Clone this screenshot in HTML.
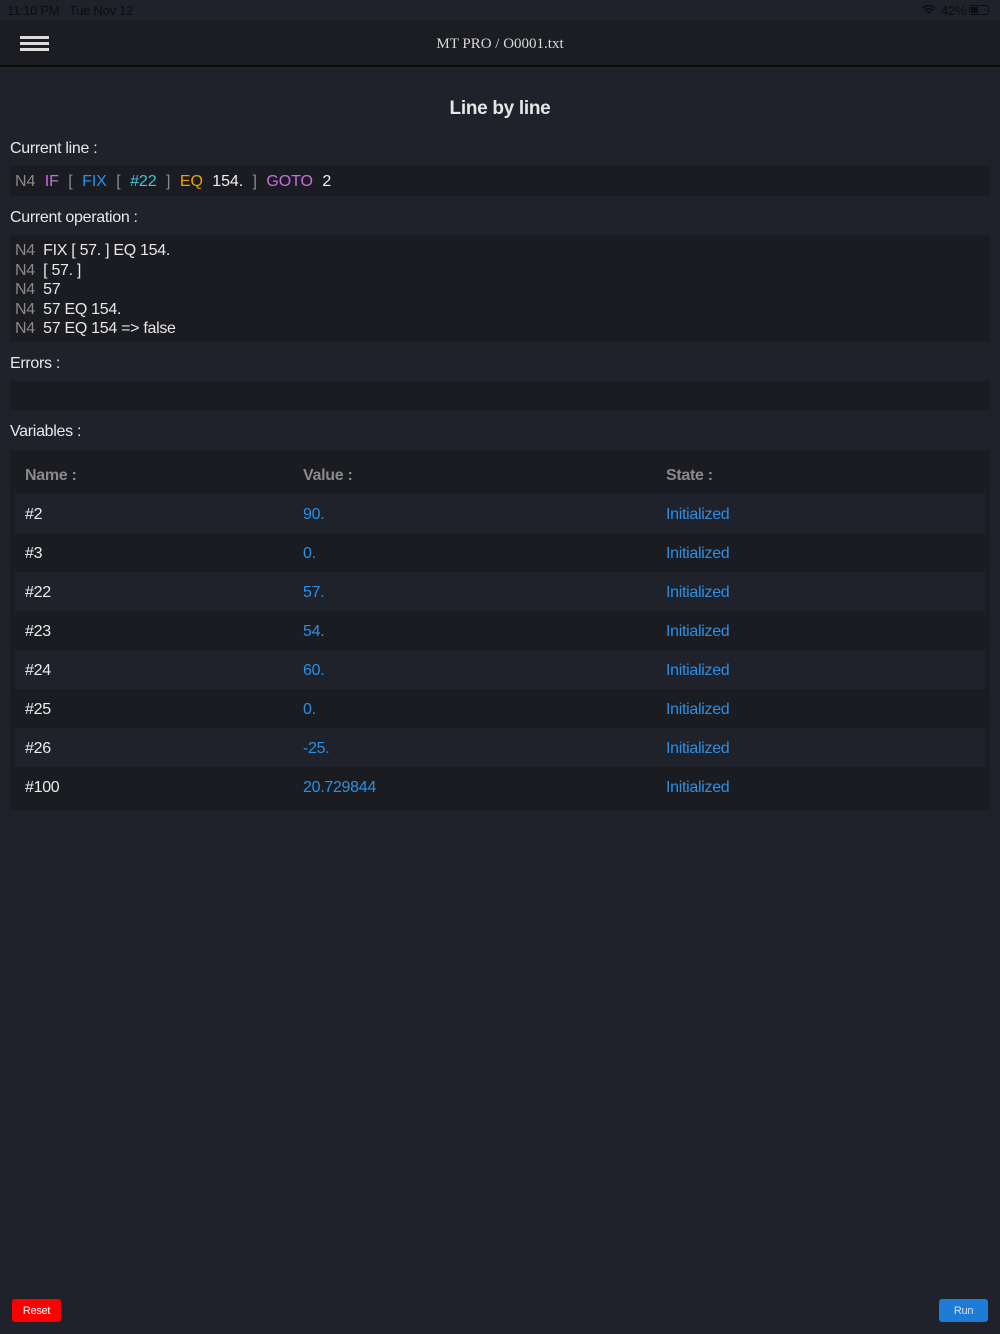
<!DOCTYPE html>
<html><head><meta charset="utf-8"><style>
*{margin:0;padding:0;box-sizing:border-box}
body{width:1000px;height:1334px;background:#1f222a;font-family:"Liberation Sans",sans-serif;position:relative;overflow:hidden;color:#e6e6e6;letter-spacing:-0.3px}
.a{position:absolute}
.sb{top:0;left:0;width:1000px;height:20px;font-size:13px;color:#0c0d10}
.hd{top:20px;left:0;width:1000px;height:47px;background:#1b1d22;border-bottom:2px solid #0a0a0c}
.box{background:#1a1c21;left:10px;width:980px}
.lbl{left:10px;font-size:16px;color:#e8e8e8}
.g{color:#8a8a8a}
.row{left:15px;width:970px;height:39px;font-size:16px;line-height:41px}
.row span{position:absolute}
.l{background:#1f222a}
.n{left:10px;color:#ececec}.v{left:288px;color:#2b8fe6}.s{left:651px;color:#2b8fe6}
</style></head><body>
<div class="a sb"><span class="a" style="left:7px;top:3px">11:10 PM&nbsp;&nbsp;&nbsp;Tue Nov 12</span>
<svg class="a" style="left:922px;top:4px" width="14" height="11" viewBox="0 0 14 11"><path d="M1 4a9 9 0 0 1 12 0M3 6.5a6 6 0 0 1 8 0M5 9a3 3 0 0 1 4 0" stroke="#0c0d10" stroke-width="1.6" fill="none"/></svg>
<span class="a" style="left:941px;top:3px">42%</span>
<div class="a" style="left:969px;top:5px;width:20px;height:10px;border:1px solid #0c0d10;border-radius:3px"><div style="width:7px;height:6px;margin:1px;background:#0c0d10"></div></div></div>
<div class="a hd">
<div class="a" style="left:20px;top:16px;width:29px;height:3px;background:#ddd"></div>
<div class="a" style="left:20px;top:22px;width:29px;height:3px;background:#ddd"></div>
<div class="a" style="left:20px;top:28px;width:29px;height:3px;background:#ddd"></div>
<div class="a" style="left:0;width:1000px;top:16px;text-align:center;font-family:'Liberation Serif',serif;font-size:15px;color:#d8d8d8;letter-spacing:0">MT PRO / O0001.txt</div>
</div>
<div class="a" style="top:98px;left:0;width:1000px;text-align:center;font-size:19px;font-weight:bold;color:#e6e6e6">Line by line</div>
<div class="a lbl" style="top:140px">Current line :</div>
<div class="a box" style="top:166px;height:30px;font-size:16px;line-height:32px;padding-left:5px;letter-spacing:-0.1px;word-spacing:0.4px"><span class="g">N4</span>&nbsp; <span style="color:#c86edb">IF</span>&nbsp; <span class="g">[</span>&nbsp; <span style="color:#2b8fe6">FIX</span>&nbsp; <span class="g">[</span>&nbsp; <span style="color:#39c7e0">#22</span>&nbsp; <span class="g">]</span>&nbsp; <span style="color:#f0a000">EQ</span>&nbsp; <span style="color:#f0f0f0">154.</span>&nbsp; <span class="g">]</span>&nbsp; <span style="color:#c86edb">GOTO</span>&nbsp; <span style="color:#f0f0f0">2</span></div>
<div class="a lbl" style="top:209px">Current operation :</div>
<div class="a box" style="top:235px;height:107px;font-size:16px;line-height:19.6px;padding:6px 0 0 5px">
<div><span class="g">N4</span>&nbsp; FIX [ 57. ] EQ 154.</div>
<div><span class="g">N4</span>&nbsp; [ 57. ]</div>
<div><span class="g">N4</span>&nbsp; 57</div>
<div><span class="g">N4</span>&nbsp; 57 EQ 154.</div>
<div><span class="g">N4</span>&nbsp; 57 EQ 154 =&gt; false</div></div>
<div class="a lbl" style="top:355px">Errors :</div>
<div class="a box" style="top:381px;height:29px"></div>
<div class="a lbl" style="top:423px">Variables :</div>
<div class="a box" style="top:450px;height:360px">
<div class="a" style="top:0;left:0;width:980px;height:44px;font-size:16px;font-weight:bold;color:#8a8a8a;line-height:51px"><span class="a" style="left:15px">Name :</span><span class="a" style="left:293px">Value :</span><span class="a" style="left:656px">State :</span></div>
</div>
<div class="a row l" style="top:494px"><span class="n">#2</span><span class="v">90.</span><span class="s">Initialized</span></div>
<div class="a row" style="top:533px"><span class="n">#3</span><span class="v">0.</span><span class="s">Initialized</span></div>
<div class="a row l" style="top:572px"><span class="n">#22</span><span class="v">57.</span><span class="s">Initialized</span></div>
<div class="a row" style="top:611px"><span class="n">#23</span><span class="v">54.</span><span class="s">Initialized</span></div>
<div class="a row l" style="top:650px"><span class="n">#24</span><span class="v">60.</span><span class="s">Initialized</span></div>
<div class="a row" style="top:689px"><span class="n">#25</span><span class="v">0.</span><span class="s">Initialized</span></div>
<div class="a row l" style="top:728px"><span class="n">#26</span><span class="v">-25.</span><span class="s">Initialized</span></div>
<div class="a row" style="top:767px"><span class="n">#100</span><span class="v">20.729844</span><span class="s">Initialized</span></div>
<div class="a" style="left:12px;top:1299px;width:49px;height:23px;background:#ff0000;border-radius:3px;color:#fff;font-size:11px;text-align:center;line-height:24px">Reset</div>
<div class="a" style="left:939px;top:1299px;width:49px;height:23px;background:#1e7bd6;border-radius:3px;color:#cfe3f7;font-size:11px;text-align:center;line-height:24px">Run</div>
</body></html>
